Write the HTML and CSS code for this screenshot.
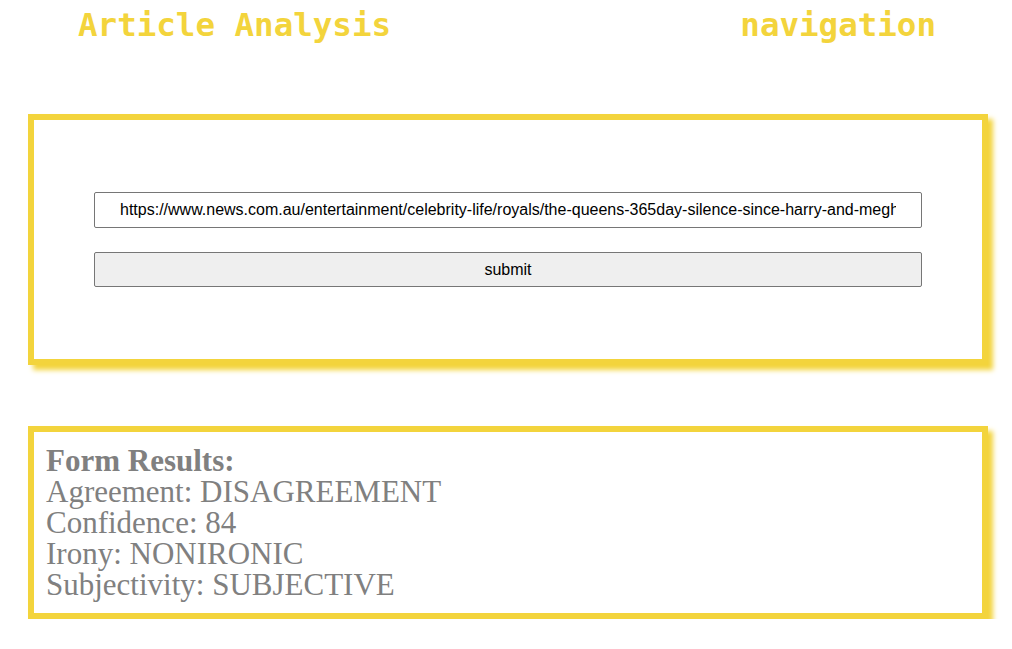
FILE: index.html
```html
<!DOCTYPE html>
<html>
<head>
<meta charset="utf-8">
<link rel="stylesheet" href="styles.css">
</head>
<body>
<header class="top">
  <h1 class="title">Article Analysis</h1>
  <nav class="nav">navigation</nav>
</header>
<main class="main">
  <section class="card form-card">
    <form class="form">
      <input class="url" type="text" value="https://www.news.com.au/entertainment/celebrity-life/royals/the-queens-365day-silence-since-harry-and-meghan-left">
      <button class="submit" type="button">submit</button>
    </form>
  </section>
  <section class="card results">
    <div class="res-title">Form Results:</div>
    <div>Agreement: DISAGREEMENT</div>
    <div>Confidence: 84</div>
    <div>Irony: NONIRONIC</div>
    <div>Subjectivity: SUBJECTIVE</div>
  </section>
</main>
</body>
</html>
```
FILE: styles.css
```css
html, body {
  margin: 0;
  padding: 0;
  background: #fff;
}
body {
  font-family: "Liberation Sans", Arial, sans-serif;
}
.top {
  display: flex;
  justify-content: space-between;
  padding: 5px 76px 0 78px;
  height: 41px;
}
.title, .nav {
  margin: 0;
  font-family: "DejaVu Sans Mono", monospace;
  font-weight: bold;
  font-size: 32.5px;
  line-height: 40px;
  color: #f3d43c;
}
.main {
  display: flex;
  flex-direction: column;
  gap: 61px;
  padding: 68px 0 0 28px;
}
.card {
  box-sizing: border-box;
  width: 960px;
  border: 6px solid #f3d43c;
  box-shadow: 5px 5px 5px #f3d43c;
  background: #fff;
}
.form-card {
  padding: 72px 60px 72px 60px;
}
.form {
  display: flex;
  flex-direction: column;
  gap: 24px;
}
.url {
  box-sizing: border-box;
  height: 36px;
  width: 100%;
  border: 1px solid #767676;
  border-radius: 2px;
  padding: 0 25px;
  font-family: "Liberation Sans", Arial, sans-serif;
  font-size: 16px;
  color: #000;
  text-align: center;
  margin: 0;
}
.submit {
  box-sizing: border-box;
  height: 35px;
  width: 100%;
  border: 1px solid #767676;
  border-radius: 2px;
  background: #efefef;
  font-family: "Liberation Sans", Arial, sans-serif;
  font-size: 16px;
  color: #000;
  margin: 0;
}
.results {
  padding: 13px 12px 13px 12px;
  font-family: "Liberation Serif", "Times New Roman", serif;
  font-size: 31px;
  line-height: 31px;
  color: #808080;
}
.res-title {
  font-weight: bold;
}
```
